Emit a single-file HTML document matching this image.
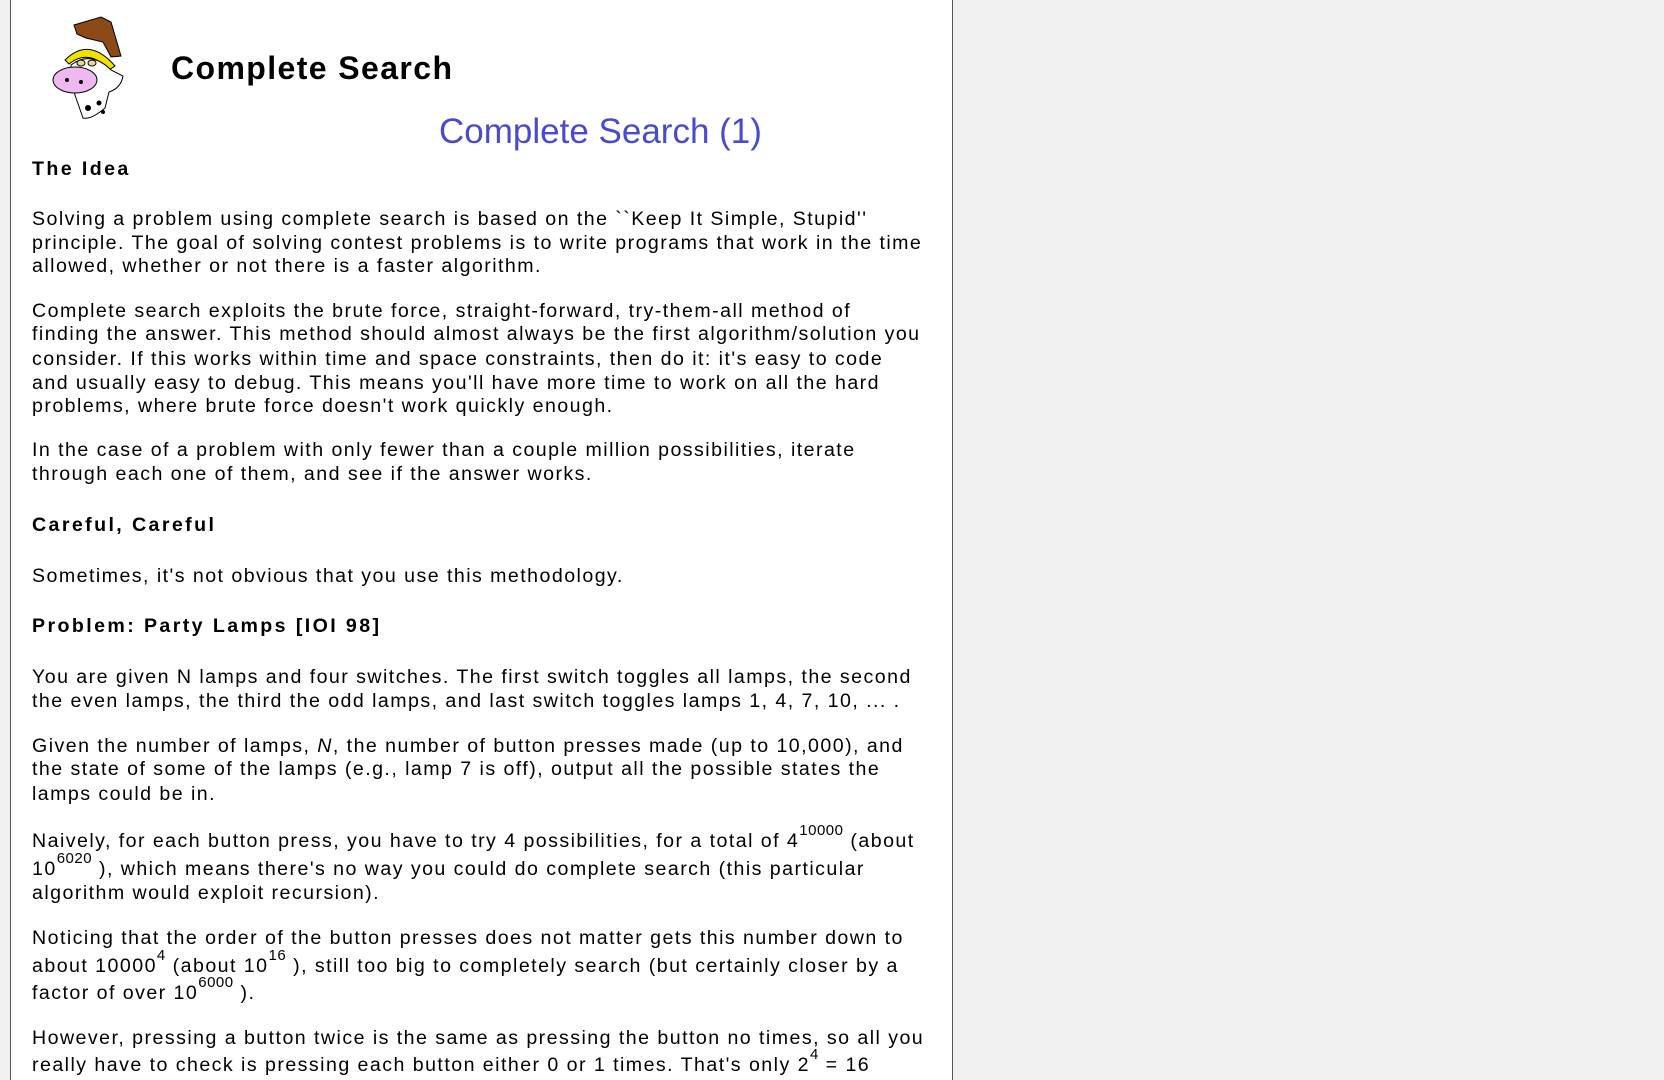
<!DOCTYPE html>
<html><head><meta charset="utf-8"><style>
html,body{margin:0;padding:0;width:1664px;height:1080px;overflow:hidden;background:#f0f0f0;font-family:"Liberation Sans",sans-serif;}
#page{position:absolute;left:10px;top:0;width:941px;height:1080px;background:#fff;border-left:1px solid #555;border-right:1px solid #555;}
.l{position:absolute;left:21px;white-space:nowrap;font-size:19.6px;letter-spacing:1.45px;line-height:24px;height:24px;color:#000;}
.b{font-weight:bold;letter-spacing:2.4px;}
sup{font-size:15px;letter-spacing:0.5px;vertical-align:top;position:relative;top:-5px;line-height:14px;}
</style></head><body>
<div id="page">
<svg style="position:absolute;left:20px;top:10px" width="110" height="115" viewBox="0 0 110 115">
 <polygon points="43,15 70,7 80,12 90,46 80,47 72,32 55,28 46,24" fill="#8b4a16" stroke="#000" stroke-width="1"/>
 <path d="M34,50 Q58,26 84,56 L78,60 Q58,38 38,54 Z" fill="#f2e200" stroke="#000" stroke-width="1"/>
 <path d="M40,55 Q60,40 80,60 L92,66 Q90,78 78,82 L74,98 Q60,110 52,108 L45,88 Q40,75 40,55Z" fill="#fff" stroke="#000" stroke-width="1"/>
 <ellipse cx="44" cy="70" rx="22" ry="13" fill="#f0b8f0" stroke="#000" stroke-width="1"/>
 <circle cx="36" cy="70" r="2" fill="#000"/><circle cx="50" cy="72" r="2" fill="#000"/>
 <ellipse cx="50" cy="53" rx="4" ry="3" fill="#e8d890" stroke="#000"/><ellipse cx="61" cy="53" rx="4" ry="3" fill="#e8d890" stroke="#000"/>
 <circle cx="57" cy="98" r="3" fill="#000"/><circle cx="68" cy="93" r="2.5" fill="#000"/><circle cx="72" cy="102" r="2" fill="#000"/>
</svg>
<div style="position:absolute;left:160px;top:48px;font-size:32px;font-weight:bold;letter-spacing:1.4px;line-height:40px;white-space:nowrap">Complete Search</div>
<div style="position:absolute;left:428px;top:110px;font-size:35px;color:#4a4ad0;line-height:44px;white-space:nowrap">Complete Search (1)</div>

<div class="l b" style="top:157px">The Idea</div>
<div class="l" style="top:207px">Solving a problem using complete search is based on the ``Keep It Simple, Stupid''</div>
<div class="l" style="top:231px">principle. The goal of solving contest problems is to write programs that work in the time</div>
<div class="l" style="top:254px">allowed, whether or not there is a faster algorithm.</div>

<div class="l" style="top:299px">Complete search exploits the brute force, straight-forward, try-them-all method of</div>
<div class="l" style="top:322px">finding the answer. This method should almost always be the first algorithm/solution you</div>
<div class="l" style="top:347px">consider. If this works within time and space constraints, then do it: it's easy to code</div>
<div class="l" style="top:371px">and usually easy to debug. This means you'll have more time to work on all the hard</div>
<div class="l" style="top:394px">problems, where brute force doesn't work quickly enough.</div>

<div class="l" style="top:438px">In the case of a problem with only fewer than a couple million possibilities, iterate</div>
<div class="l" style="top:462px">through each one of them, and see if the answer works.</div>

<div class="l b" style="top:513px">Careful, Careful</div>
<div class="l" style="top:564px">Sometimes, it's not obvious that you use this methodology.</div>
<div class="l b" style="top:614px">Problem: Party Lamps [IOI 98]</div>

<div class="l" style="top:665px">You are given N lamps and four switches. The first switch toggles all lamps, the second</div>
<div class="l" style="top:689px">the even lamps, the third the odd lamps, and last switch toggles lamps 1, 4, 7, 10, ... .</div>

<div class="l" style="top:734px">Given the number of lamps, <i>N</i>, the number of button presses made (up to 10,000), and</div>
<div class="l" style="top:757px">the state of some of the lamps (e.g., lamp 7 is off), output all the possible states the</div>
<div class="l" style="top:782px">lamps could be in.</div>

<div class="l" style="top:829px">Naively, for each button press, you have to try 4 possibilities, for a total of 4<sup>10000</sup> (about</div>
<div class="l" style="top:857px">10<sup>6020</sup> ), which means there's no way you could do complete search (this particular</div>
<div class="l" style="top:881px">algorithm would exploit recursion).</div>

<div class="l" style="top:926px">Noticing that the order of the button presses does not matter gets this number down to</div>
<div class="l" style="top:954px">about 10000<sup>4</sup> (about 10<sup>16</sup> ), still too big to completely search (but certainly closer by a</div>
<div class="l" style="top:981px">factor of over 10<sup>6000</sup> ).</div>

<div class="l" style="top:1026px">However, pressing a button twice is the same as pressing the button no times, so all you</div>
<div class="l" style="top:1053px">really have to check is pressing each button either 0 or 1 times. That's only 2<sup>4</sup> = 16</div>
</div>
</body></html>
